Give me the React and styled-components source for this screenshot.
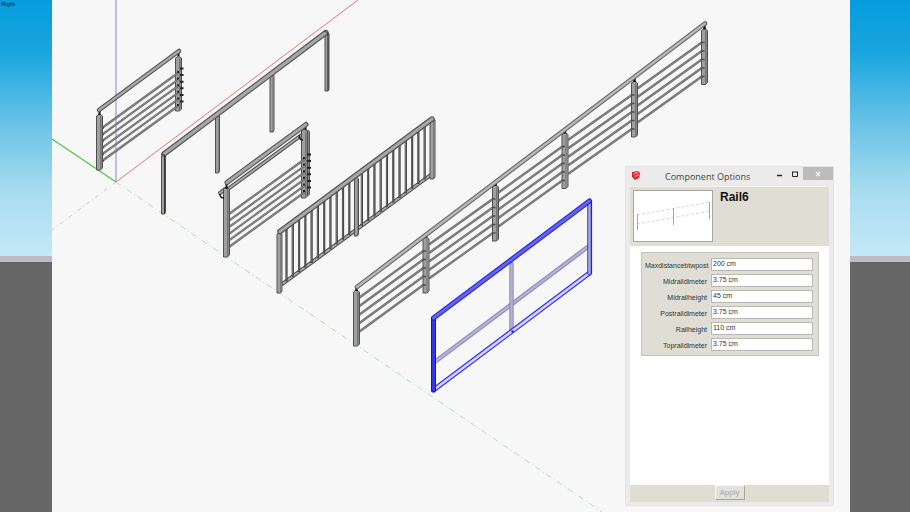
import React from "react";
import styled, { createGlobalStyle } from "styled-components";

const GlobalStyle = createGlobalStyle`
  *, *::before, *::after { box-sizing: border-box; }
  body { margin: 0; font-family: "Open Sans", sans-serif; overflow: hidden; }
`;

const Desktop = styled.div`
  display: grid;
  grid-template-columns: 52px 1fr 60px;
  height: 100vh;
`;

const Backdrop = styled.div`
  display: grid;
  grid-template-rows: 50% 6px 1fr;
`;

const Sky = styled.div`
  background: linear-gradient(#079ddd 0%, #18a5df 20%, #69c2e6 48%, #a9dcf0 75%, #c4e9f7 100%);
`;

const Horizon = styled.div`
  background: #bdbcc6;
`;

const Ground = styled.div`
  background: #666666;
`;

const ViewName = styled.span`
  display: block;
  padding-left: 1px;
  font: 6px/8px "Liberation Sans", sans-serif;
  color: #06283c;
`;

const Canvas = styled.main`
  position: relative;
  background: #f7f7f7;
  overflow: hidden;
`;

const Model = styled.svg`
  display: block;
  width: 100%;
  height: 100%;
`;

const Dialog = styled.section`
  position: absolute;
  top: 166px;
  right: 16px;
  width: 209px;
  height: 340px;
  display: flex;
  flex-direction: column;
  padding: 0 4px 3px;
  background: #ebebeb;
  border: 1px solid #e2e2e2;
`;

const TitleBar = styled.header`
  display: flex;
  height: 19px;
  margin-right: -4px;
  flex: none;
`;

const AppIcon = styled.svg`
  width: 10px;
  height: 10px;
  margin: 3px 0 0 1px;
`;

const Title = styled.h1`
  flex: 1;
  margin: 0;
  padding-left: 24px;
  font: 400 9px/19px "Open Sans", sans-serif;
  color: #444;
  white-space: nowrap;
`;

const WindowButton = styled.button`
  display: grid;
  place-items: center;
  width: ${(p) => (p.$close ? 30 : 16)}px;
  height: 13px;
  padding: 0;
  border: 0;
  color: ${(p) => (p.$close ? "#f4f4f4" : "#222")};
  background: ${(p) => (p.$close ? "#bcbcbc" : "transparent")};

  svg { width: 8px; height: 8px; }
`;

const Summary = styled.div`
  display: flex;
  gap: 7px;
  height: 60px;
  padding: 3px 3px 5px;
  flex: none;
  background: #e0ddd5;
  border-top: 1px solid #f3f1ec;
`;

const Preview = styled.svg`
  width: 80px;
  height: 52px;
  background: #fff;
  border: 1px solid #a8a7a2;
`;

const ComponentName = styled.h2`
  margin: 0;
  font: 700 12px/14px "Liberation Sans", Arial, sans-serif;
  color: #111;
`;

const Body = styled.div`
  flex: 1;
  padding: 6px 10px 0 11px;
  background: #fff;
`;

const OptionList = styled.div`
  display: grid;
  gap: 3px;
  padding: 5px 5px 4px 3px;
  background: #e0ddd4;
  border: 1px solid #c4c3bc;
`;

const OptionRow = styled.div`
  display: grid;
  grid-template-columns: minmax(0, 1fr) 102px;
  gap: 4px;
  align-items: end;
  height: 13px;
`;

const OptionLabel = styled.label`
  font: 7px/10px "Liberation Sans", Arial, sans-serif;
  color: #333;
  text-align: right;
  white-space: nowrap;
`;

const OptionInput = styled.input`
  width: 100%;
  height: 13px;
  padding: 0 1px 2px;
  border: 1px solid #b9b8b3;
  background: #fff;
  font: 7px/10px "Liberation Sans", Arial, sans-serif;
  color: #333;
  outline: none;
`;

const Footer = styled.footer`
  display: flex;
  justify-content: center;
  height: 17px;
  flex: none;
  background: #e0ddd3;
`;

const ApplyButton = styled.button`
  width: 30px;
  height: 15px;
  padding: 0;
  border: 1px solid;
  border-color: #fafafa #a5a49e #a5a49e #fafafa;
  background: #e3e1dc;
  font: 8px/12px "Liberation Sans", Arial, sans-serif;
  color: #aaa9a5;
`;

const range = (n) => Array.from({ length: n }, (_, i) => i);

function Beam({ x1, y1, x2, y2, w = 5, edge = "#4c4c4c", fill = "#a6a6a6" }) {
  const line = { x1, y1, x2, y2 };
  return (
    <g>
      <line {...line} stroke={edge} strokeWidth={w} strokeLinecap="round" />
      <line {...line} stroke={fill} strokeWidth={w - 2} strokeLinecap="round" />
    </g>
  );
}

function Post({ x, top, bottom, w = 6 }) {
  const h = w / 2;
  return (
    <g>
      <path
        d={`M${x - h} ${top + 1}L${x} ${top - 1}L${x + h} ${top + 1}V${bottom - 2}L${x + 1} ${bottom}H${x - h}Z`}
        fill="#a0a0a0"
        stroke="#505050"
        strokeWidth="1"
      />
      <path d={`M${x + 1} ${top + 1}V${bottom}`} stroke="#6a6a6a" strokeWidth="0.8" />
      <path d={`M${x + h - 1} ${top + 2}V${bottom - 2}`} stroke="#858585" strokeWidth="1" />
    </g>
  );
}

function Rod({ x1, y1, x2, y2 }) {
  return (
    <g>
      <line {...{ x1, y1, x2, y2 }} stroke="#666" strokeWidth="2.2" />
      <line {...{ x1, y1, x2, y2 }} stroke="#999" strokeWidth="0.8" />
    </g>
  );
}

function Axes() {
  return (
    <g fill="none">
      <path d="M116 182V0" stroke="#8585d2" strokeWidth="1" />
      <path d="M116 182L358 0" stroke="#df7777" strokeWidth="1" />
      <path d="M116 182L52 139" stroke="#48c948" strokeWidth="1.2" />
      <path d="M116 182L52 230" stroke="#c5b9b9" strokeWidth="0.8" strokeDasharray="4 3 1 3" />
      <path d="M116 182L602 512" stroke="#9ed5a8" strokeWidth="0.8" strokeDasharray="6 3 1 3" />
    </g>
  );
}

function CableRail() {
  return (
    <g>
      <Post x={178.5} top={57} bottom={111} />
      {range(6).map((i) => (
        <g key={i}>
          <Rod x1={102} y1={128 + i * 6.6} x2={178} y2={73 + i * 6.6} />
          <path d={`M101 ${128 + i * 6.6}h2.5M177 ${72 + i * 6.6}h2M180 ${68.5 + i * 6.6}h3.5`} stroke="#222" strokeWidth="2" />
        </g>
      ))}
      <Post x={99.5} top={115} bottom={170} />
      <path d="M99.500 111v4M178.500 52v4" stroke="#111" strokeWidth="2" />
      <Beam x1={99} y1={110} x2={179} y2={51} w={4.6} />
    </g>
  );
}

function OpenRail() {
  const posts = [[327, 33, 91], [272, 74, 132], [217.5, 115, 173], [163.5, 155, 214]];
  return (
    <g>
      {posts.map(([x, top, bottom]) => (
        <Post key={x} x={x} top={top} bottom={bottom} w={4} />
      ))}
      <Beam x1={164} y1={154} x2={326} y2={32.500} w={5.4} />
      <path d="M161.500 154l3 1v59M324 31l4 2v58" stroke="#333" fill="none" />
    </g>
  );
}

function BracketRail() {
  return (
    <g>
      <Beam x1={228} y1={189} x2={303} y2={134} w={4} />
      <Beam x1={220} y1={193} x2={225} y2={189} w={4} />
      <Post x={308} top={131} bottom={195} w={3} />
      <Post x={304.5} top={130} bottom={198} />
      {range(6).map((i) => (
        <g key={i}>
          <Rod x1={229} y1={214 + i * 6.6} x2={305} y2={159 + i * 6.6} />
          <path d={`M227 ${214.500 + i * 6.6}h3M303 ${158 + i * 6.6}h2M307 ${154.500 + i * 6.6}h4`} stroke="#222" strokeWidth="2" />
        </g>
      ))}
      <Post x={226.5} top={188} bottom={257} />
      <path d="M220 194q0 4 4 4M299 135q0 5 4 5" stroke="#222" strokeWidth="1.5" fill="none" />
      <path d="M226.500 184v5M305.500 125v5" stroke="#111" strokeWidth="2" />
      <Beam x1={227} y1={182.500} x2={306} y2={124.500} w={5} />
    </g>
  );
}

function BalusterRail() {
  return (
    <g>
      <Beam x1={283} y1={283.500} x2={432} y2={174} w={4} />
      {range(23).filter((i) => i !== 11).map((i) => {
        const x = 286.5 + i * 6.28;
        const y = 228.5 - i * 4.64;
        return (
          <g key={i}>
            <line x1={x} y1={y} x2={x} y2={y + 53} stroke="#3e3e3e" strokeWidth="2.2" />
            <line x1={x - 0.3} y1={y} x2={x - 0.3} y2={y + 52} stroke="#858585" strokeWidth="0.7" />
          </g>
        );
      })}
      <Post x={356.5} top={178} bottom={236} w={4} />
      <Post x={432.5} top={119} bottom={179} w={5} />
      <Post x={279.5} top={233} bottom={293} w={5} />
      <Beam x1={280} y1={231.500} x2={432} y2={119} w={5.4} />
    </g>
  );
}

function LongRail() {
  const posts = [[356.5, 290], [426, 237], [495.5, 185], [565, 132.5], [634.5, 81], [704.5, 28.5]];
  return (
    <g>
      {posts.slice(0, -1).map(([x, top], p) =>
        range(5).map((i) => (
          <Rod
            key={`${p}-${i}`}
            x1={x + 3}
            y1={top + 7.5 + i * 8.5}
            x2={posts[p + 1][0] - 2}
            y2={posts[p + 1][1] + 13.5 + i * 8.5}
          />
        ))
      )}
      {posts.map(([x, top], p) => (
        <g key={x}>
          <Post x={x} top={top + 1} bottom={top + 56} />
          {p > 0 && range(5).map((i) => (
            <path key={i} d={`M${x - 3} ${top + 14 + i * 8.5}h3`} stroke="#4b4b4b" strokeWidth="1.5" />
          ))}
          <path d={`M${x} ${top - 3}v4`} stroke="#111" strokeWidth="2.5" />
        </g>
      ))}
      <Beam x1={357} y1={287} x2={705} y2={23.500} w={4.6} edge="#606060" fill="#b6b6b6" />
    </g>
  );
}

function SelectedRail() {
  const soft = { edge: "#8784d4", fill: "#b5b3c5" };
  return (
    <g>
      <Beam x1={436} y1={361} x2={587} y2={247.500} w={4.4} {...soft} />
      <Beam x1={511.5} y1={264} x2={511.5} y2={331} w={4.4} {...soft} />
      <Beam x1={433.500} y1={390} x2={589.500} y2={273} w={4.8} edge="#2929f0" fill="#d0d0ff" />
      <Beam x1={589.500} y1={202} x2={589.500} y2={273} w={4.6} edge="#3434ee" fill="#aaa8cf" />
      <path d="M591.500 201V274" stroke="#2020e8" strokeWidth="1.2" />
      <Beam x1={433.500} y1={319} x2={433.500} y2={390} w={5} edge="#1111df" fill="#3636e9" />
      <Beam x1={433.500} y1={318} x2={589.500} y2={201} w={5} edge="#1818ed" fill="#6665e1" />
      <path d="M511.500 331l2 1" stroke="#2424dc" strokeWidth="2" />
    </g>
  );
}

function RailPreview() {
  return (
    <Preview viewBox="0 0 78 50" aria-label="Rail preview">
      <g fill="none">
        <path d="M3 24L76 11M3 33L76 20" stroke="#d6d6d6" strokeDasharray="3 2" />
        <path d="M3.500 23v16M39.500 17v17M75.500 11v17" stroke="#a5a5a5" />
      </g>
    </Preview>
  );
}

const options = [
  ["Maxdistancebtwpost", "200 cm"],
  ["Midraildimeter", "3.75 cm"],
  ["Midrailheight", "45 cm"],
  ["Postraildimeter", "3.75 cm"],
  ["Railheight", "110 cm"],
  ["Topraildimeter", "3.75 cm"],
];

function OptionsDialog() {
  return (
    <Dialog role="dialog" aria-labelledby="dialog-title">
      <TitleBar>
        <AppIcon viewBox="0 0 10 10">
          <path d="M1 2L7 1L9 3L8 8L4 10L1 7Z" fill="#d92330" />
          <path d="M2 3L6 2L8 3L5 4ZM5 5L8 4L7 6L5 7Z" fill="#ff8c92" />
          <path d="M2 4L4 5V8" stroke="#f9656d" fill="none" />
        </AppIcon>
        <Title id="dialog-title">Component Options</Title>
        <WindowButton type="button" aria-label="Minimize">
          <svg viewBox="0 0 8 8"><path d="M2 5.500h5" stroke="currentColor" strokeWidth="1.5" /></svg>
        </WindowButton>
        <WindowButton type="button" aria-label="Maximize">
          <svg viewBox="0 0 8 8"><path d="M1.500 2v4.500h5V2M1 2h6" fill="none" stroke="currentColor" /></svg>
        </WindowButton>
        <WindowButton type="button" aria-label="Close" $close>
          <svg viewBox="0 0 8 8"><path d="M2 2l4 4M6 2L2 6" stroke="currentColor" strokeWidth="1.2" /></svg>
        </WindowButton>
      </TitleBar>
      <Summary>
        <RailPreview />
        <ComponentName>Rail6</ComponentName>
      </Summary>
      <Body>
        <OptionList>
          {options.map(([name, value]) => (
            <OptionRow key={name}>
              <OptionLabel htmlFor={name}>{name}</OptionLabel>
              <OptionInput id={name} defaultValue={value} />
            </OptionRow>
          ))}
        </OptionList>
      </Body>
      <Footer>
        <ApplyButton type="button" disabled>Apply</ApplyButton>
      </Footer>
    </Dialog>
  );
}

export default function App() {
  return (
    <>
      <GlobalStyle />
      <Desktop>
        <Backdrop>
          <Sky><ViewName>Right</ViewName></Sky>
          <Horizon />
          <Ground />
        </Backdrop>
        <Canvas>
          <Model viewBox="52 0 798 512" preserveAspectRatio="xMinYMin meet" aria-label="Railing models">
            <Axes />
            <CableRail />
            <OpenRail />
            <BracketRail />
            <BalusterRail />
            <LongRail />
            <SelectedRail />
          </Model>
          <OptionsDialog />
        </Canvas>
        <Backdrop>
          <Sky />
          <Horizon />
          <Ground />
        </Backdrop>
      </Desktop>
    </>
  );
}
